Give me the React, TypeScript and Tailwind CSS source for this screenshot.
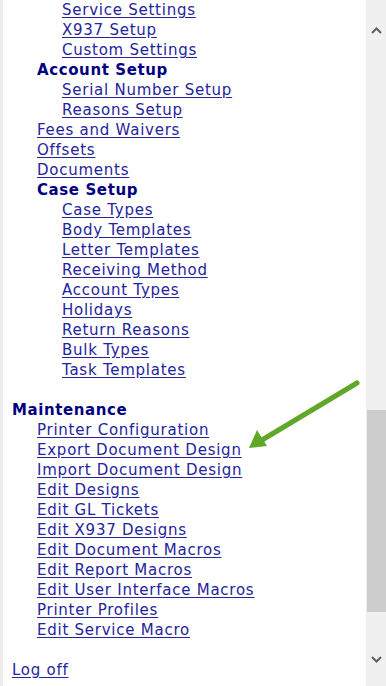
import React from 'react';

type Item = { label: string; level: number; heading?: boolean };

const items: (Item | null)[] = [
  { label: 'Service Settings', level: 2 },
  { label: 'X937 Setup', level: 2 },
  { label: 'Custom Settings', level: 2 },
  { label: 'Account Setup', level: 1, heading: true },
  { label: 'Serial Number Setup', level: 2 },
  { label: 'Reasons Setup', level: 2 },
  { label: 'Fees and Waivers', level: 1 },
  { label: 'Offsets', level: 1 },
  { label: 'Documents', level: 1 },
  { label: 'Case Setup', level: 1, heading: true },
  { label: 'Case Types', level: 2 },
  { label: 'Body Templates', level: 2 },
  { label: 'Letter Templates', level: 2 },
  { label: 'Receiving Method', level: 2 },
  { label: 'Account Types', level: 2 },
  { label: 'Holidays', level: 2 },
  { label: 'Return Reasons', level: 2 },
  { label: 'Bulk Types', level: 2 },
  { label: 'Task Templates', level: 2 },
  null,
  { label: 'Maintenance', level: 0, heading: true },
  { label: 'Printer Configuration', level: 1 },
  { label: 'Export Document Design', level: 1 },
  { label: 'Import Document Design', level: 1 },
  { label: 'Edit Designs', level: 1 },
  { label: 'Edit GL Tickets', level: 1 },
  { label: 'Edit X937 Designs', level: 1 },
  { label: 'Edit Document Macros', level: 1 },
  { label: 'Edit Report Macros', level: 1 },
  { label: 'Edit User Interface Macros', level: 1 },
  { label: 'Printer Profiles', level: 1 },
  { label: 'Edit Service Macro', level: 1 },
  null,
  { label: 'Log off', level: 0 },
];

const indent = ['pl-0', 'pl-[25px]', 'pl-[50px]'];

export default function App() {
  return (
    <div className="relative flex w-[386px] h-[686px] overflow-hidden bg-white font-['DejaVu_Sans',Verdana,sans-serif] text-[15px]">
      <div className="flex-1 border-l-[3px] border-[#ededed] pl-[9px]">
        {items.map((item, i) =>
          item === null ? (
            <div key={i} className="h-[20px]" />
          ) : (
            <div key={i} className={`h-[20px] leading-[20px] whitespace-nowrap ${indent[item.level]}`}>
              {item.heading ? (
                <span className="font-bold text-[#000080] tracking-[0.6px]">{item.label}</span>
              ) : (
                <a href="#" className="text-[#24249c] tracking-[0.75px] underline underline-offset-2">
                  {item.label}
                </a>
              )}
            </div>
          )
        )}
      </div>

      {/* Scrollbar */}
      <div className="w-[20px] flex flex-col bg-[#f0f0f0]">
        <div className="h-[60px] flex items-center justify-center text-[#606060]">
          <svg width="11" height="7" viewBox="0 0 11 7">
            <path d="M1 6 L5.5 1.5 L10 6" fill="none" stroke="currentColor" strokeWidth="2" />
          </svg>
        </div>
        <div className="flex-1 flex flex-col pl-px">
          <div className="h-[350px]" />
          <div className="h-[202px] bg-[#cdcdcd]" />
        </div>
        <div className="h-[54px] flex items-center justify-center text-[#606060]">
          <svg width="11" height="7" viewBox="0 0 11 7">
            <path d="M1 1 L5.5 5.5 L10 1" fill="none" stroke="currentColor" strokeWidth="2" />
          </svg>
        </div>
      </div>

      {/* Callout arrow */}
      <svg className="absolute left-0 top-0 pointer-events-none" width="386" height="686">
        <line x1="357" y1="383" x2="262" y2="440" stroke="#5fa829" strokeWidth="5" strokeLinecap="round" />
        <polygon points="249,448 257,430 267,446" fill="#5fa829" />
      </svg>
    </div>
  );
}
